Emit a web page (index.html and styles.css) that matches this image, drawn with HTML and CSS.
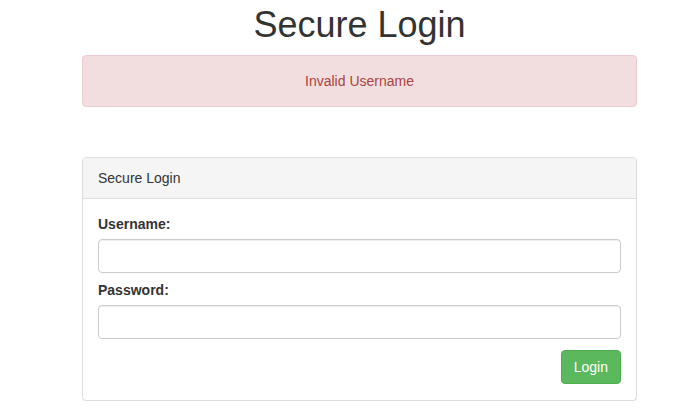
FILE: index.html
```html
<!DOCTYPE html>
<html>
<head>
<meta charset="utf-8">
<link rel="stylesheet" href="styles.css">
</head>
<body>
<div class="container">
  <h1 class="title">Secure Login</h1>
  <div class="alert">Invalid Username</div>
  <div class="panel">
    <div class="panel-heading">Secure Login</div>
    <form class="panel-body">
      <div class="form-group">
        <label for="u">Username:</label>
        <input id="u" type="text" class="form-control">
      </div>
      <div class="form-group">
        <label for="p">Password:</label>
        <input id="p" type="password" class="form-control">
      </div>
      <div class="actions">
        <button type="button" class="btn">Login</button>
      </div>
    </form>
  </div>
</div>
</body>
</html>
```
FILE: styles.css
```css
* { box-sizing: border-box; }
html, body { margin: 0; padding: 0; background: #fff; }
body {
  font-family: "Liberation Sans", Arial, sans-serif;
  font-size: 14px;
  line-height: 20px;
  color: #333;
}
.container {
  padding: 0 62px 0 82px;
}
.title {
  margin: 5px 0 10px;
  font-size: 36px;
  font-weight: 500;
  line-height: 39.6px;
  text-align: center;
  color: #333;
}
.alert {
  padding: 15px;
  background: #f2dede;
  border: 1px solid #ebccd1;
  border-radius: 4px;
  color: #a94442;
  text-align: center;
  margin-bottom: 50px;
}
.panel {
  border: 1px solid #ddd;
  border-radius: 4px;
  box-shadow: 0 1px 1px rgba(0,0,0,.05);
  background: #fff;
}
.panel-heading {
  padding: 10px 15px;
  background: #f5f5f5;
  border-bottom: 1px solid #ddd;
  border-radius: 3px 3px 0 0;
}
.panel-body {
  padding: 15px 15px 16px;
  margin: 0;
  display: flex;
  flex-direction: column;
}
.form-group {
  display: flex;
  flex-direction: column;
  margin-bottom: 7px;
}
label {
  font-weight: bold;
  margin-bottom: 5px;
}
.form-control {
  height: 34px;
  padding: 6px 12px;
  border: 1px solid #ccc;
  border-radius: 4px;
  box-shadow: inset 0 1px 1px rgba(0,0,0,.075);
  font: inherit;
  width: 100%;
}
.actions {
  display: flex;
  justify-content: flex-end;
  margin-top: 4px;
}
.btn {
  font: inherit;
  color: #fff;
  background: #5cb85c;
  border: 1px solid #4cae4c;
  border-radius: 4px;
  padding: 6px 12px;
  line-height: 20px;
  cursor: pointer;
}
```
